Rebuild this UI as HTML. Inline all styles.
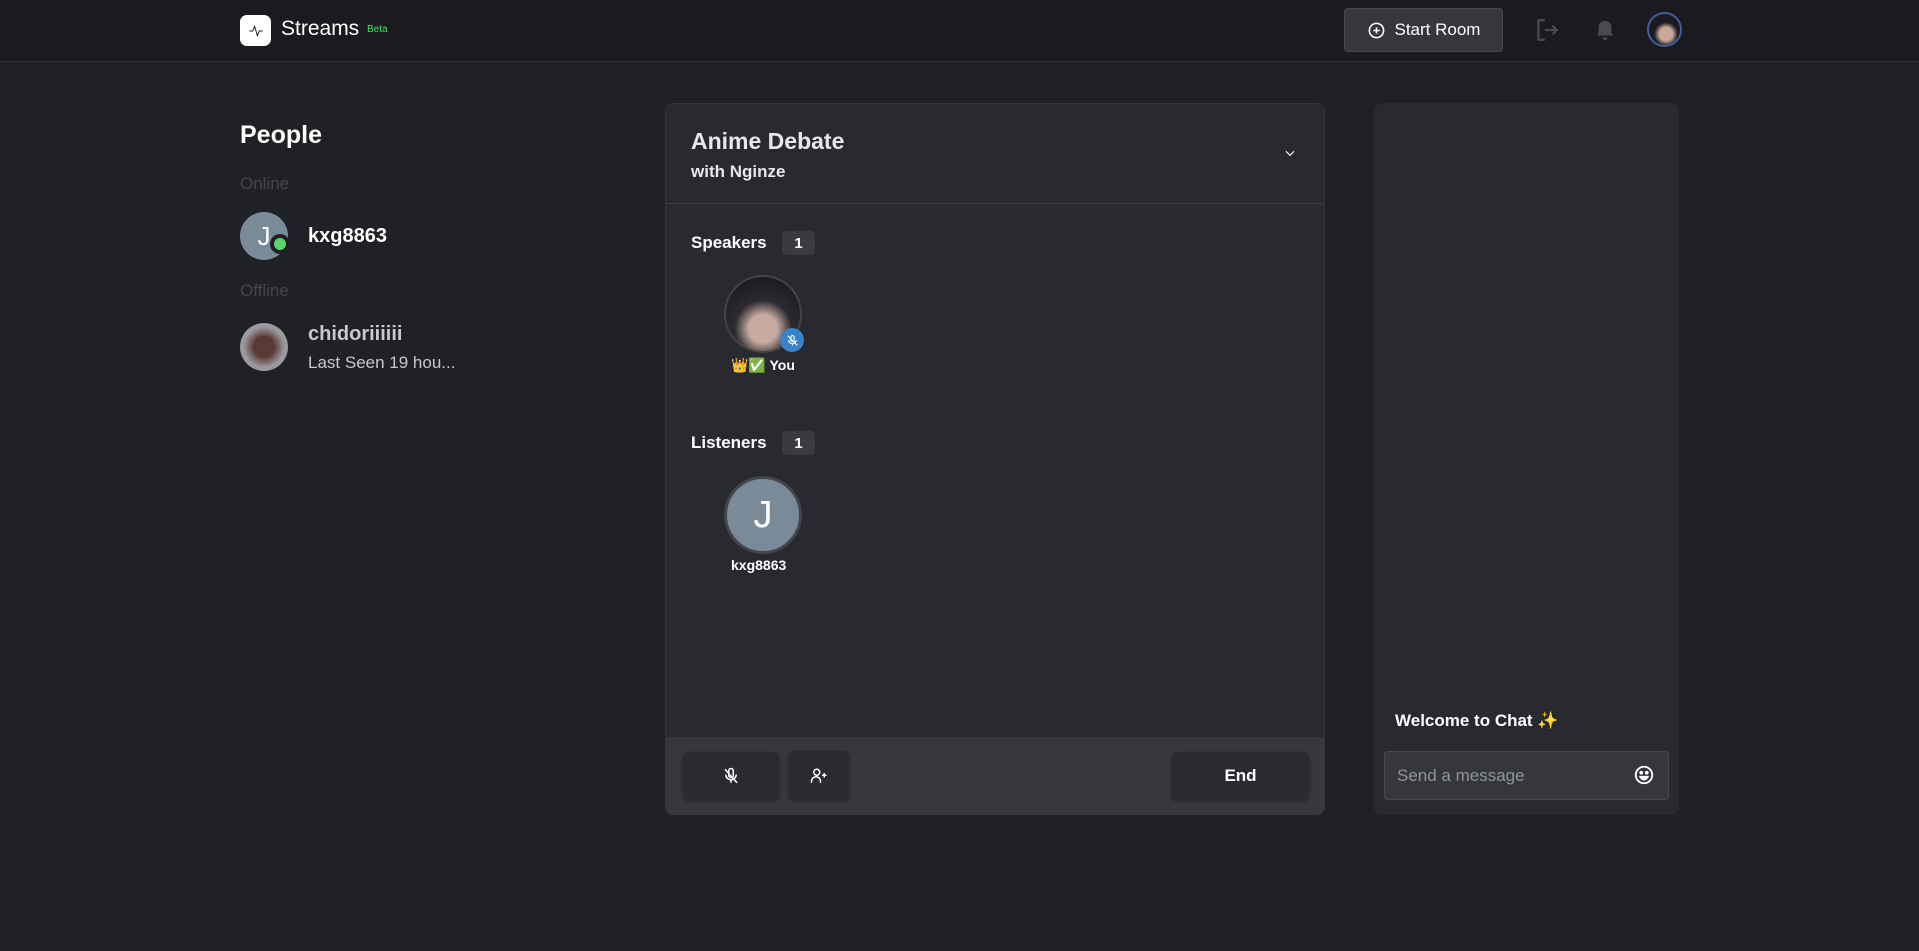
<!DOCTYPE html>
<html><head><meta charset="utf-8"><style>
*{box-sizing:border-box;margin:0;padding:0}
body{width:1919px;height:951px;background:#202125;font-family:"Liberation Sans","Noto Sans CJK JP",sans-serif;color:#fff;position:relative;overflow:hidden}
.abs{position:absolute}
.hdr{left:0;top:0;width:1919px;height:62px;background:#1b1b1f;border-bottom:1px solid #33343a}
.av{border-radius:50%;display:flex;align-items:center;justify-content:center}
.btn{background:#2a2b30;border-radius:6px;display:flex;align-items:center;justify-content:center;box-shadow:0 1px 3px rgba(0,0,0,.4)}
.badge{background:#3a3b40;border-radius:4px;font-size:15px;font-weight:bold;display:flex;align-items:center;justify-content:center;width:33px;height:24px}
</style></head><body>
<div class="abs hdr"></div>
<div class="abs" style="left:240px;top:15px;width:31px;height:31px;background:#fff;border-radius:7px;display:flex;align-items:center;justify-content:center">
<svg width="16" height="16" viewBox="0 0 24 24" fill="none" stroke="#222" stroke-width="1.5"><path d="M2 12h5l3-7 4 14 3-7h5"/></svg></div>
<div class="abs" style="left:281px;top:17px;font-size:21px;font-weight:500">Streams</div>
<div class="abs" style="left:367px;top:24px;font-size:10px;color:#4ade6a">Beta</div>
<div class="abs" style="left:1344px;top:8px;width:159px;height:44px;background:#36373c;border:1px solid #47484d;border-radius:4px;display:flex;align-items:center;justify-content:center;gap:9px;font-size:17px;font-weight:500">
<svg width="19" height="19" viewBox="0 0 24 24" fill="none" stroke="#fff" stroke-width="2"><circle cx="12" cy="12" r="9"/><path d="M12 8v8M8 12h8"/></svg>Start Room</div>
<svg class="abs" style="left:1534px;top:17px" width="26" height="26" viewBox="0 0 24 24" fill="none" stroke="#4a4b50" stroke-width="2"><path d="M10 3H4v18h6M10 12h11M17 8l4 4-4 4"/></svg>
<svg class="abs" style="left:1594px;top:18px" width="22" height="24" viewBox="0 0 24 24" fill="#4a4b50"><path d="M12 2a7 7 0 0 0-7 7v6l-2 3h18l-2-3V9a7 7 0 0 0-7-7zM9 20a3 3 0 0 0 6 0z"/></svg>
<div class="abs av" style="left:1647px;top:12px;width:35px;height:35px;border:2px solid #3d5f9e;background:radial-gradient(circle at 55% 65%,#c9a89a 0 25%,#1a1a1f 45%)"></div>

<div class="abs" style="left:240px;top:121px;font-size:25px;font-weight:bold">People</div>
<div class="abs" style="left:240px;top:174px;font-size:17px;color:#45464b">Online</div>
<div class="abs av" style="left:240px;top:212px;width:48px;height:48px;background:#798b99;font-size:26px">J</div>
<div class="abs" style="left:270px;top:234px;width:20px;height:20px;border-radius:50%;background:#202125;display:flex;align-items:center;justify-content:center"><div style="width:12px;height:12px;border-radius:50%;background:#5fd36f"></div></div>
<div class="abs" style="left:308px;top:225px;font-size:20px;font-weight:bold">kxg8863</div>
<div class="abs" style="left:240px;top:281px;font-size:17px;color:#45464b">Offline</div>
<div class="abs av" style="left:240px;top:323px;width:48px;height:48px;background:radial-gradient(circle,#5a3a34 0 30%,#9a9a9e 60%)"></div>
<div class="abs" style="left:308px;top:323px;font-size:20px;font-weight:bold;color:#c9c9cc">chidoriiiiii</div>
<div class="abs" style="left:308px;top:353px;font-size:17px;color:#c9c9cc">Last Seen 19 hou...</div>

<div class="abs" style="left:665px;top:103px;width:660px;height:712px;background:#292a30;border:1px solid #35363b;border-radius:8px;overflow:hidden">
<div class="abs" style="left:25px;top:24px;font-size:23px;font-weight:bold;color:#e8e8ea">Anime Debate</div>
<div class="abs" style="left:25px;top:58px;font-size:17px;font-weight:bold;color:#e8e8ea">with Nginze</div>
<svg class="abs" style="left:617px;top:42px" width="14" height="14" viewBox="0 0 24 24" fill="none" stroke="#fff" stroke-width="2"><path d="M5 9l7 7 7-7"/></svg>
<div class="abs" style="left:0;top:99px;width:660px;height:1px;background:#3d3e44"></div>
<div class="abs" style="left:25px;top:129px;font-size:17px;font-weight:bold">Speakers</div>
<div class="abs badge" style="left:116px;top:127px">1</div>
<div class="abs av" style="left:58px;top:171px;width:78px;height:78px;border:2px solid #444;background:radial-gradient(circle at 50% 70%,#c8aaa0 0 22%,#2a2a30 45%,#151518)"></div>
<div class="abs av" style="left:114px;top:224px;width:24px;height:24px;background:#3a82c7">
<svg width="13" height="13" viewBox="0 0 24 24" fill="none" stroke="#fff" stroke-width="2"><rect x="9" y="3" width="6" height="11" rx="3"/><path d="M5 11a7 7 0 0 0 14 0M12 18v3M3 3l18 18"/></svg></div>
<div class="abs" style="left:65px;top:253px;font-size:14px;font-weight:bold">👑✅ You</div>
<div class="abs" style="left:25px;top:329px;font-size:17px;font-weight:bold">Listeners</div>
<div class="abs badge" style="left:116px;top:327px">1</div>
<div class="abs av" style="left:58px;top:372px;width:78px;height:78px;border:3px solid #45464b;background:#798b99;font-size:38px">J</div>
<div class="abs" style="left:65px;top:453px;font-size:14px;font-weight:bold">kxg8863</div>
<div class="abs" style="left:0;top:633px;width:660px;height:79px;background:#37383d"></div>
<div class="abs btn" style="left:17px;top:648px;width:96px;height:48px"><svg width="18" height="18" viewBox="0 0 24 24" fill="none" stroke="#fff" stroke-width="2"><rect x="9" y="2" width="6" height="12" rx="3"/><path d="M5 10a7 7 0 0 0 14 0M12 17v4M4 3l16 18"/></svg></div>
<div class="abs btn" style="left:123px;top:647px;width:60px;height:49px"><svg width="18" height="18" viewBox="0 0 24 24" fill="none" stroke="#fff" stroke-width="2"><circle cx="9" cy="7" r="4"/><path d="M2 21v-2a6 6 0 0 1 12 0v2M19 8v6M16 11h6"/></svg></div>
<div class="abs btn" style="left:506px;top:648px;width:137px;height:48px;font-size:17px;font-weight:bold">End</div>
</div>

<div class="abs" style="left:1374px;top:103px;width:305px;height:712px;background:#292a30;border-radius:8px">
<div class="abs" style="left:21px;top:608px;font-size:17px;font-weight:bold">Welcome to Chat ✨</div>
<div class="abs" style="left:10px;top:648px;width:285px;height:49px;background:#36373c;border:1px solid #48494e;border-radius:4px">
<div class="abs" style="left:12px;top:14px;font-size:17px;color:#8f949b">Send a message</div>
<svg class="abs" style="left:248px;top:12px" width="22" height="22" viewBox="0 0 24 24" fill="none" stroke="#fff" stroke-width="2"><circle cx="12" cy="12" r="9"/><path d="M8 14c1 2 2.5 3 4 3s3-1 4-3z" fill="#fff"/><circle cx="9" cy="9.5" r="1" fill="#fff"/><circle cx="15" cy="9.5" r="1" fill="#fff"/></svg>
</div></div>
</body></html>
